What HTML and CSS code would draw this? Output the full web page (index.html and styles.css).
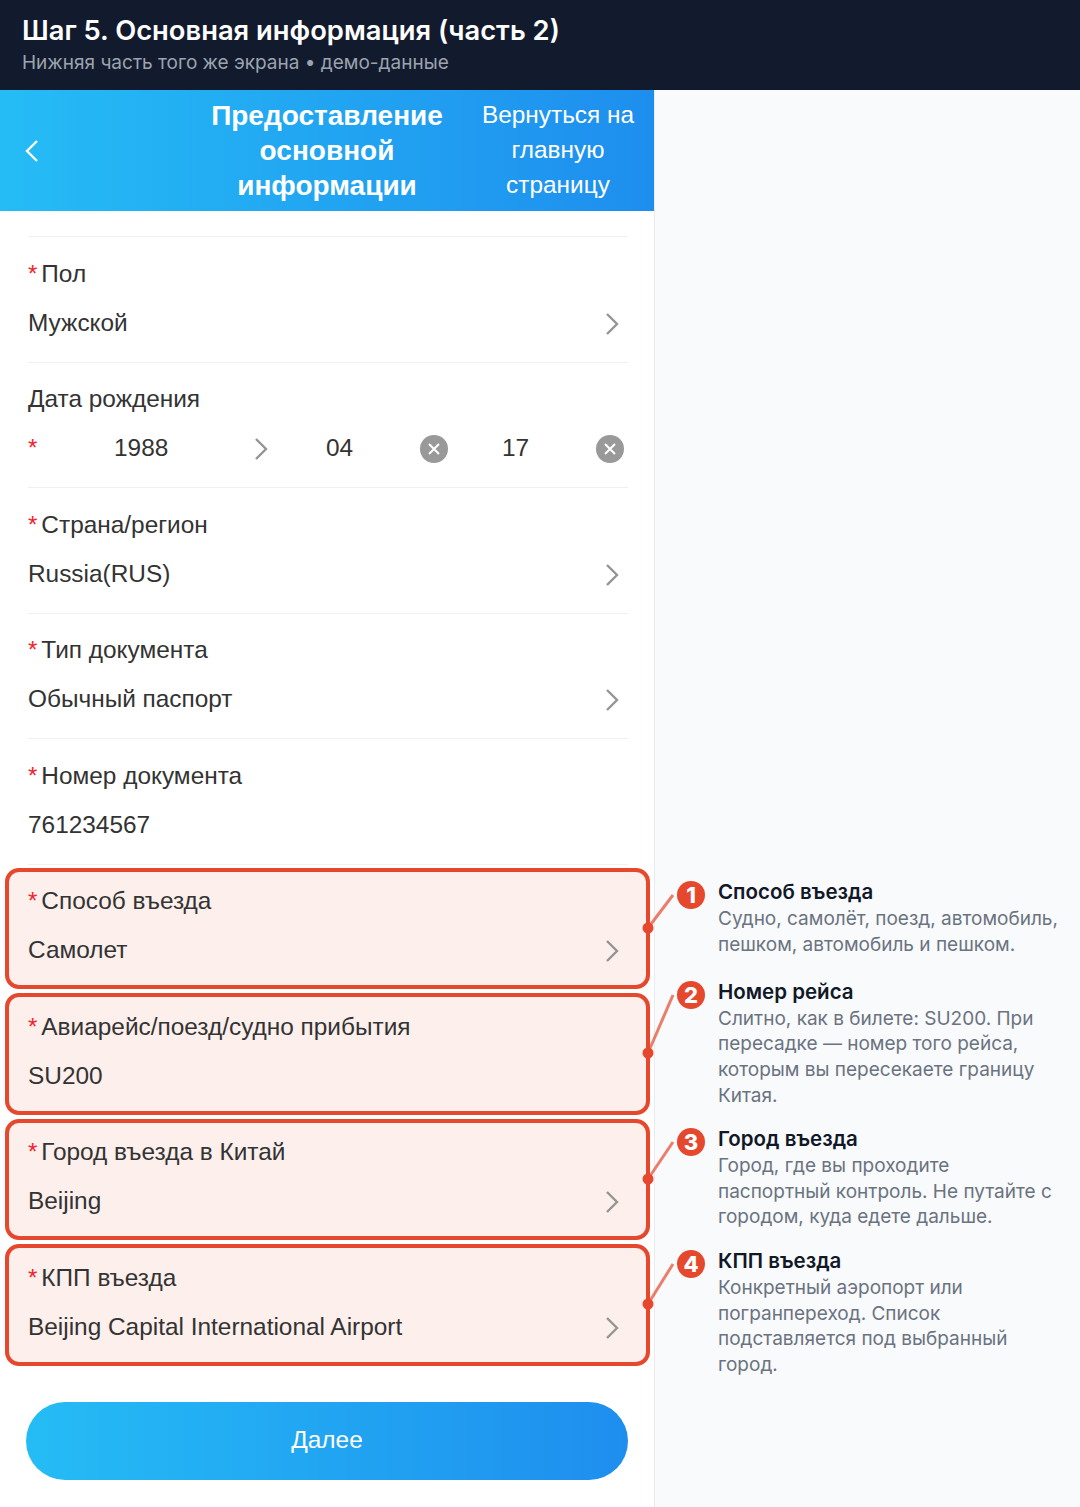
FILE: index.html
```html
<!DOCTYPE html>
<html lang="ru">
<head>
<meta charset="utf-8">
<title>Шаг 5</title>
<link rel="stylesheet" href="styles.css">
</head>
<body>
<header class="top">
  <h1 class="top-title">Шаг 5. Основная информация (часть 2)</h1>
  <p class="top-sub">Нижняя часть того же экрана • демо-данные</p>
</header>
<div class="main">
  <section class="phone">
    <div class="nav">
      <svg class="back" width="16" height="24" viewBox="0 0 16 24"><polyline points="13,2 3,12 13,22"/></svg>
      <div class="nav-title">Предоставление основной информации</div>
      <div class="nav-link">Вернуться на главную страницу</div>
    </div>
    <div class="form">
      <div class="stub"></div>
      <div class="row">
        <div class="label"><span class="star">*</span>Пол</div>
        <div class="value"><span>Мужской</span><svg class="chev" width="14" height="24" viewBox="0 0 14 24"><polyline points="2,2 12,12 2,22"/></svg></div>
      </div>
      <div class="row">
        <div class="label">Дата рождения</div>
        <div class="date">
          <span class="star date-star">*</span>
          <div class="field f-year"><span>1988</span><svg class="chev" width="14" height="24" viewBox="0 0 14 24"><polyline points="2,2 12,12 2,22"/></svg></div>
          <div class="field f-part"><span>04</span><svg class="clear" width="28" height="28" viewBox="0 0 28 28"><circle cx="14" cy="14" r="14"/><path d="M9 9l10 10M19 9L9 19"/></svg></div>
          <div class="field f-last"><span>17</span><svg class="clear" width="28" height="28" viewBox="0 0 28 28"><circle cx="14" cy="14" r="14"/><path d="M9 9l10 10M19 9L9 19"/></svg></div>
        </div>
      </div>
      <div class="row">
        <div class="label"><span class="star">*</span>Страна/регион</div>
        <div class="value"><span>Russia(RUS)</span><svg class="chev" width="14" height="24" viewBox="0 0 14 24"><polyline points="2,2 12,12 2,22"/></svg></div>
      </div>
      <div class="row">
        <div class="label"><span class="star">*</span>Тип документа</div>
        <div class="value"><span>Обычный паспорт</span><svg class="chev" width="14" height="24" viewBox="0 0 14 24"><polyline points="2,2 12,12 2,22"/></svg></div>
      </div>
      <div class="row">
        <div class="label"><span class="star">*</span>Номер документа</div>
        <div class="value"><span>761234567</span></div>
      </div>
      <div class="row hl">
        <div class="label"><span class="star">*</span>Способ въезда</div>
        <div class="value"><span>Самолет</span><svg class="chev" width="14" height="24" viewBox="0 0 14 24"><polyline points="2,2 12,12 2,22"/></svg></div>
      </div>
      <div class="row hl">
        <div class="label"><span class="star">*</span>Авиарейс/поезд/судно прибытия</div>
        <div class="value"><span>SU200</span></div>
      </div>
      <div class="row hl">
        <div class="label"><span class="star">*</span>Город въезда в Китай</div>
        <div class="value"><span>Beijing</span><svg class="chev" width="14" height="24" viewBox="0 0 14 24"><polyline points="2,2 12,12 2,22"/></svg></div>
      </div>
      <div class="row hl">
        <div class="label"><span class="star">*</span>КПП въезда</div>
        <div class="value"><span>Beijing Capital International Airport</span><svg class="chev" width="14" height="24" viewBox="0 0 14 24"><polyline points="2,2 12,12 2,22"/></svg></div>
      </div>
      <button class="next">Далее</button>
    </div>
  </section>
  <aside class="notes">
    <div class="note note-1">
      <span class="badge">1</span>
      <div class="note-body"><div class="note-title">Способ въезда</div><div class="note-text">Судно, самолёт, поезд, автомобиль, пешком, автомобиль и пешком.</div></div>
    </div>
    <div class="note note-2">
      <span class="badge">2</span>
      <div class="note-body"><div class="note-title">Номер рейса</div><div class="note-text">Слитно, как в билете: SU200. При пересадке — номер того рейса, которым вы пересекаете границу Китая.</div></div>
    </div>
    <div class="note note-3">
      <span class="badge">3</span>
      <div class="note-body"><div class="note-title">Город въезда</div><div class="note-text">Город, где вы проходите паспортный контроль. Не путайте с городом, куда едете дальше.</div></div>
    </div>
    <div class="note note-4">
      <span class="badge">4</span>
      <div class="note-body"><div class="note-title">КПП въезда</div><div class="note-text">Конкретный аэропорт или погранпереход. Список подставляется под выбранный город.</div></div>
    </div>
  </aside>
  <svg class="links" width="1080" height="1417" viewBox="0 90 1080 1417">
    <g class="link-line">
      <line x1="648" y1="928" x2="673" y2="895"/>
      <line x1="648" y1="1053" x2="673" y2="995"/>
      <line x1="648" y1="1179" x2="673" y2="1142"/>
      <line x1="648" y1="1304" x2="673" y2="1264"/>
    </g>
    <g class="link-dot">
      <circle cx="648" cy="928" r="5.5"/>
      <circle cx="648" cy="1053" r="5.5"/>
      <circle cx="648" cy="1179" r="5.5"/>
      <circle cx="648" cy="1304" r="5.5"/>
    </g>
  </svg>
</div>
</body>
</html>
```

FILE: styles.css
```css
* { box-sizing: border-box; }
html, body { margin: 0; padding: 0; }
body {
  width: 1080px;
  height: 1507px;
  overflow: hidden;
  background: #f8fafc;
  font-family: "Liberation Sans", Arial, sans-serif;
}
.top {
  height: 90px;
  background: #121b2d;
  padding: 13px 22px 0;
  font-family: Inter, sans-serif;
}
.top-title {
  margin: 0;
  font-size: 27.35px;
  line-height: 35px;
  font-weight: 600;
  color: #fff;
}
.top-sub {
  margin: 3px 0 0;
  font-size: 19px;
  line-height: 24px;
  color: #9ca3af;
}
.main {
  position: relative;
  display: flex;
  height: 1417px;
}
.phone {
  width: 655px;
  flex: none;
  background: #fff;
  border-right: 1px solid #e8ecf1;
}
.nav {
  display: flex;
  align-items: center;
  height: 121px;
  padding-bottom: 2px;
  background: linear-gradient(90deg, #25bcf5, #1e8eee);
  color: #fff;
  font-size: 24.4px;
  line-height: 35px;
  text-align: center;
}
.back {
  flex: none;
  margin: 2px 0 0 24px;
  fill: none;
  stroke: #fff;
  stroke-width: 2.4;
}
.nav-title {
  width: 240px;
  margin: 2px 0 0 167px;
  font-size: 28px;
  font-weight: 700;
}
.nav-link {
  width: 160px;
  margin-left: 31px;
}
.form {
  padding: 0 26px 0 28px;
}
.stub {
  height: 26px;
  border-bottom: 1px solid #f0f0f0;
}
.row {
  position: relative;
  height: 125.5px;
  padding-top: 18.75px;
  border-bottom: 1px solid #f0f0f0;
  font-size: 24.4px;
  line-height: 36px;
  color: #333;
}
.row.hl { border-bottom: 0; }
.row.hl::before {
  content: "";
  position: absolute;
  z-index: 0;
  left: -23px;
  right: -22px;
  top: 3.25px;
  bottom: .75px;
  background: #fdefec;
  border: 4px solid #e5482d;
  border-radius: 14px;
}
.label, .value, .date { position: relative; z-index: 1; }
.label { color: #333; }
.star {
  color: #f5222d;
  margin-right: 4px;
  font-size: 24px;
}
.value, .date {
  display: flex;
  align-items: center;
  margin-top: 13px;
}
.value { justify-content: space-between; padding-right: 9px; }
.chev {
  flex: none;
  margin-top: 2px;
  fill: none;
  stroke: #949494;
  stroke-width: 2.4;
}
.date-star { width: 86px; margin: 0; }
.field {
  display: flex;
  align-items: center;
  justify-content: space-between;
}
.f-year { width: 154px; margin-right: 58px; }
.f-part { width: 122px; margin-right: 54px; }
.f-last { width: 122px; }
.clear { margin-top: 2px; }
.clear circle { fill: #999; }
.clear path { fill: none; stroke: #fff; stroke-width: 2; }
.next {
  display: block;
  width: 602px;
  height: 78px;
  margin: 35.25px 0 0 -2px;
  padding-bottom: 3px;
  border: 0;
  border-radius: 39px;
  background: linear-gradient(90deg, #25bcf5, #1e8eee);
  color: #fff;
  font: 24.4px "Liberation Sans", Arial, sans-serif;
}
.notes {
  flex: 1;
  padding: 789px 20px 0 22px;
  font-family: Inter, sans-serif;
}
.note {
  display: flex;
  gap: 13px;
}
.note-2 { margin-top: 21.2px; }
.note-3 { margin-top: 17.4px; }
.note-4 { margin-top: 18px; }
.badge {
  flex: none;
  width: 28px;
  height: 28px;
  margin-top: 2px;
  border-radius: 50%;
  background: #e5482d;
  color: #fff;
  font-size: 22px;
  line-height: 28px;
  font-weight: 800;
  text-align: center;
}
.note-title {
  font-size: 20.5px;
  line-height: 26px;
  font-weight: 600;
  color: #111827;
}
.note-text {
  margin-top: 1px;
  font-size: 19px;
  line-height: 25.7px;
  color: #6b7280;
}
.links {
  position: absolute;
  left: 0;
  top: 0;
  pointer-events: none;
}
.link-line line { stroke: #e5482d; stroke-opacity: .7; stroke-width: 3; }
.link-dot circle { fill: #e5482d; }
```
